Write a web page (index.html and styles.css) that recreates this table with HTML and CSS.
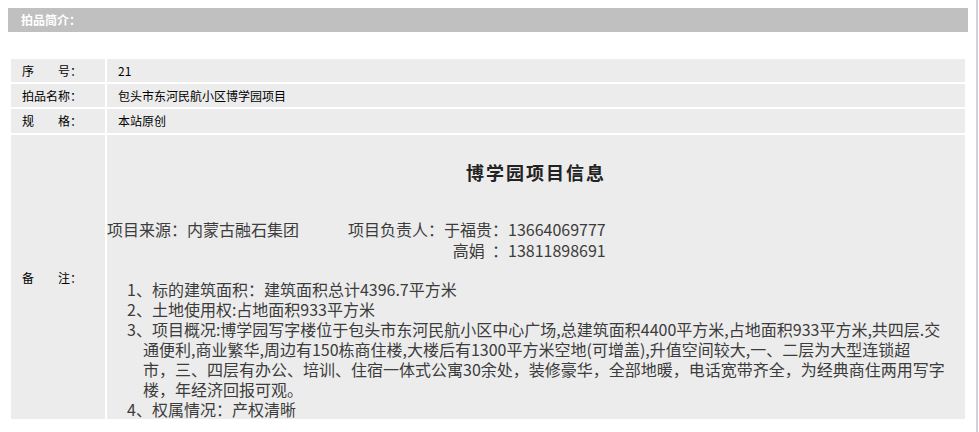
FILE: index.html
```html
<!DOCTYPE html>
<html lang="zh-CN">
<head>
  <meta charset="UTF-8" />
  <title>拍品简介</title>
  <link rel="stylesheet" href="styles.css">
</head>
<body>
  <div class="page">
    <!-- Section header -->
    <div class="section-title">拍品简介：</div>

    <!-- Lot info -->
    <table class="info-table">
      <tr>
        <td class="label">序　　号：</td>
        <td class="value">21</td>
      </tr>
      <tr>
        <td class="label">拍品名称：</td>
        <td class="value">包头市东河民航小区博学园项目</td>
      </tr>
      <tr class="row-spec">
        <td class="label">规　　格：</td>
        <td class="value">本站原创</td>
      </tr>
      <tr>
        <td class="label">备　　注：</td>
        <td class="remark">
          <h3 class="remark-title">博学园项目信息</h3>
          <div class="contact">
            <span>项目来源：内蒙古融石集团</span>
            <div class="contact-people">
              <div>项目负责人：于福贵：13664069777</div>
              <div>高娟&nbsp;&nbsp;：13811898691</div>
            </div>
          </div>
          <div class="facts">
            <p>1、标的建筑面积：建筑面积总计4396.7平方米</p>
            <p>2、土地使用权:占地面积933平方米</p>
            <p>3、项目概况:博学园写字楼位于包头市东河民航小区中心广场,总建筑面积4400平方米,占地面积933平方米,共四层.交<br>通便利,商业繁华,周边有150栋商住楼,大楼后有1300平方米空地(可增盖),升值空间较大,一、二层为大型连锁超<br>市，三、四层有办公、培训、住宿一体式公寓30余处，装修豪华，全部地暖，电话宽带齐全，为经典商住两用写字<br>楼，年经济回报可观。</p>
            <p>4、权属情况：产权清晰</p>
          </div>
        </td>
      </tr>
    </table>
  </div>
</body>
</html>
```

FILE: styles.css
```css
body {
  margin: 0;
  background: #fff;
  font-family: "Noto Sans CJK SC", "Liberation Sans", sans-serif;
  color: #000;
}

.page {
  width: 968px;
  min-height: 100vh;
  padding: 8px 0 0 8px;
  border-right: 2px solid #d3d1d9;
  box-sizing: content-box;
}

.section-title {
  width: 947px;
  height: 24px;
  line-height: 24px;
  padding-left: 13px;
  background-color: #c0c0c0;
  color: #fff;
  font-size: 12px;
  font-weight: bold;
}

.info-table {
  width: 958px;
  margin: 25px 0 0 1px;
  border-collapse: separate;
  border-spacing: 2px;
  font-size: 12px;
}

.info-table td {
  background-color: #ececec;
  line-height: 15px;
  padding: 4px 0;
}

.info-table .label {
  width: 83px;
  padding-left: 11px;
  vertical-align: middle;
  white-space: nowrap;
}

.info-table .value {
  padding-left: 11px;
}

.row-spec td {
  padding-bottom: 5px;
}

.info-table .remark {
  padding: 0;
  font-size: 16px;
  color: #3c3c3c;
  vertical-align: top;
}

.remark-title {
  margin: 27px 0 0;
  line-height: 20px;
  font-size: 18px;
  letter-spacing: 2px;
  font-weight: bold;
  text-align: center;
  color: #222;
}

.contact {
  display: flex;
  gap: 49px;
  margin-top: 37px;
  line-height: 21px;
  white-space: nowrap;
}

.contact-people {
  text-align: right;
}

.facts {
  margin-top: 18px;
  padding-left: 36px;
  line-height: 20px;
}

.facts p {
  margin: 0;
  text-indent: -16px;
  white-space: nowrap;
}
```
